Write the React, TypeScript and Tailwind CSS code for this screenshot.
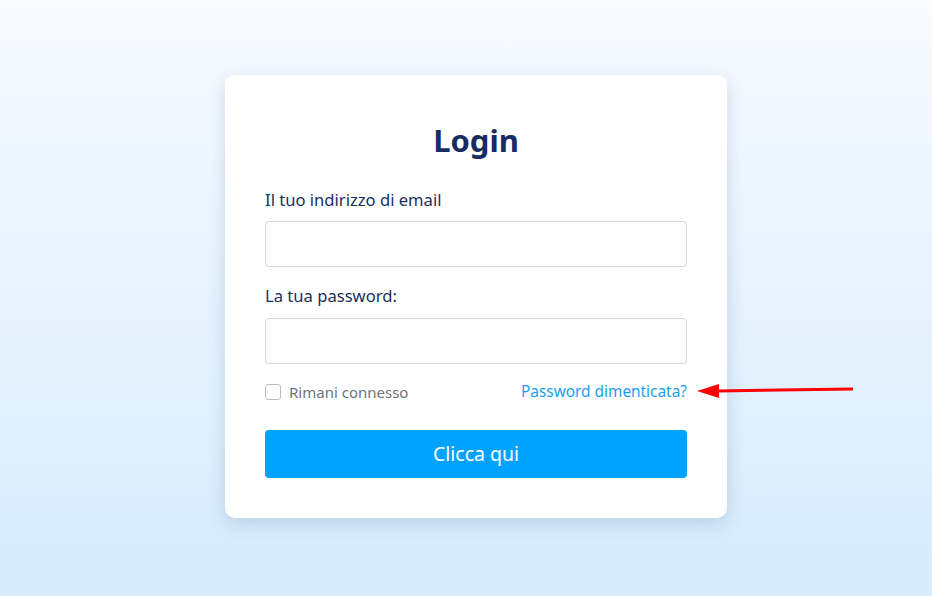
export default function App() {
  return (
    <div
      className="relative min-h-[596px] w-full bg-gradient-to-b from-[#f8fbff] to-[#d6ebfc] pt-[75px] flex justify-center pl-5"
      style={{ fontFamily: '"Noto Sans", "Open Sans", sans-serif' }}
    >
      {/* Card */}
      <div className="w-[502px] h-[443px] bg-white rounded-[10px] shadow-[0_6px_18px_rgba(40,80,130,0.18)] px-10 pt-[45px]">
        <h1 className="text-[31px] leading-[40px] font-bold text-[#172d62] text-center">Login</h1>

        <label className="block mt-[28px] text-[16.6px] leading-6 text-[#1b2f5e]">Il tuo indirizzo di email</label>
        <input
          type="email"
          className="block w-full h-[46px] mt-[9px] border border-[#d3d6db] rounded-[4px] bg-white outline-none"
        />

        <label className="block mt-[17px] text-[16.6px] leading-6 text-[#1b2f5e]">La tua password:</label>
        <input
          type="password"
          className="block w-full h-[46px] mt-[10px] border border-[#d3d6db] rounded-[4px] bg-white outline-none"
        />

        <div className="mt-4 h-6 flex items-center justify-between">
          <label className="flex items-center gap-2 text-[15px] text-[#6e737b]">
            <span className="w-4 h-4 rounded-[3px] border border-[#b9bdc3] bg-white" />
            Rimani connesso
          </label>
          <a className="text-[15.4px] text-[#1a9ff0]">Password dimenticata?</a>
        </div>

        <button className="mt-[26px] w-full h-12 rounded-[4px] bg-[#00a2ff] text-white text-[19.5px]">
          Clicca qui
        </button>
      </div>

      {/* Annotation arrow */}
      <svg className="absolute left-[695px] top-[381px]" width="162" height="18" viewBox="0 0 162 18">
        <line x1="22" y1="10" x2="158" y2="8" stroke="#ff0000" strokeWidth="3" />
        <polygon points="2,10 24,3 24,17" fill="#ff0000" />
      </svg>
    </div>
  );
}
